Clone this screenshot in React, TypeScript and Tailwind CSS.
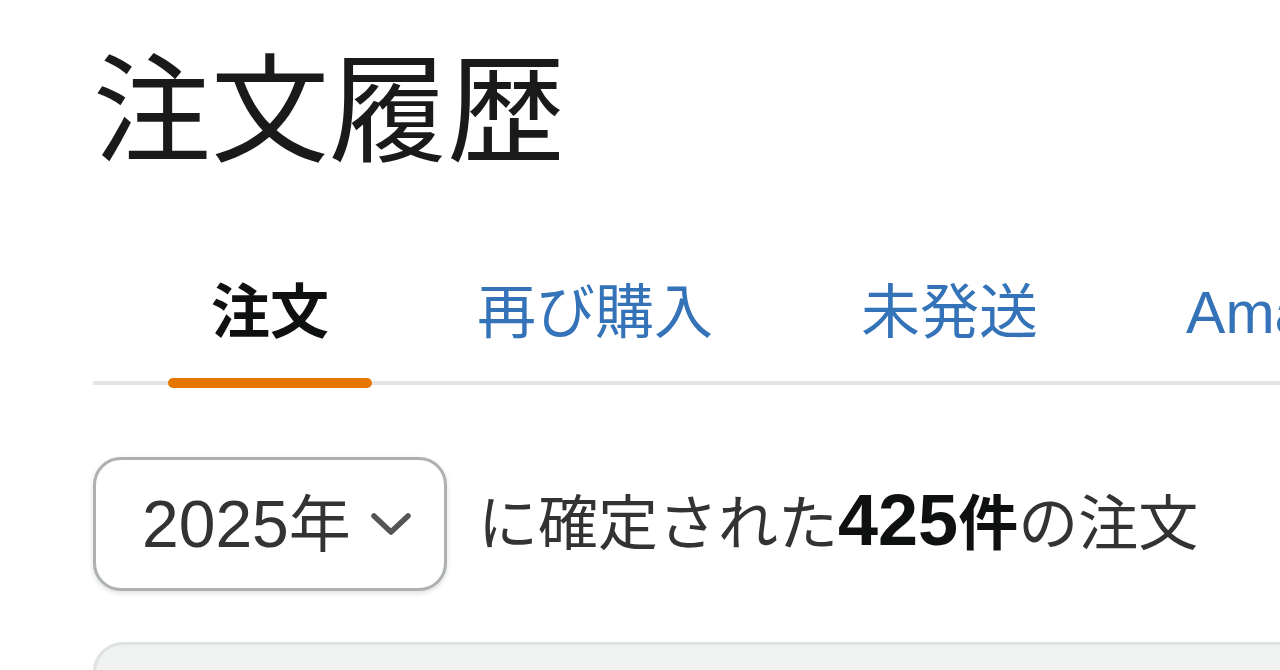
export default function App() {
  const tabs = ["注文", "再び購入", "未発送", "Amazonデジタル"];
  return (
    <div
      className="min-h-screen w-[1280px] h-[670px] overflow-hidden bg-white pl-[93px] pt-[53px] text-[#0f1111]"
      style={{ fontFamily: '"Liberation Sans", "Noto Sans CJK JP", sans-serif' }}
    >
      <h1 className="text-[118px] leading-none font-normal whitespace-nowrap text-[#1a1a1a]">注文履歴</h1>

      <div className="mt-[113px] flex w-[1400px] flex-nowrap gap-[62px] border-b-[4px] border-[#e3e6e6] pl-[75px] whitespace-nowrap">
        {tabs.map((t, i) => (
          <div key={t} className="relative px-[43px] pb-[38px]">
            <span
              className={
                i === 0
                  ? "text-[59px] leading-none font-bold text-[#0f1111]"
                  : "text-[59px] leading-none text-[#3573b9]"
              }
            >
              {t}
            </span>
            {i === 0 && (
              <div className="absolute left-0 right-0 bottom-[-7px] h-[10px] rounded-full bg-[#e77600]" />
            )}
          </div>
        ))}
      </div>

      <div className="mt-[72px] flex items-center gap-[31px] whitespace-nowrap">
        <div className="flex h-[134px] w-[354px] items-center rounded-[28px] border-[3px] border-[#adb1b1] bg-white pl-[46px] shadow-[0_2px_5px_rgba(15,17,17,0.15)]">
          <span className="leading-none text-[#333]">
            <span className="text-[66px]">2025</span>
            <span className="text-[62px]">年</span>
          </span>
          <svg className="ml-[18px]" width="44" height="28" viewBox="0 0 44 28" fill="none">
            <path d="M5 6 L22 22 L39 6" stroke="#555" strokeWidth="5.5" strokeLinecap="round" strokeLinejoin="round" />
          </svg>
        </div>
        <p className="mb-[8px] text-[60px] leading-none text-[#333]">
          に確定された
          <span className="font-bold text-[#0f1111]">
            <span className="text-[72px]">425</span>件
          </span>
          の注文
        </p>
      </div>

      <div className="mt-[51px] h-[120px] w-[1300px] rounded-tl-[30px] border-[3px] border-[#dfe2e2] bg-[#f0f2f2]" />
    </div>
  );
}
